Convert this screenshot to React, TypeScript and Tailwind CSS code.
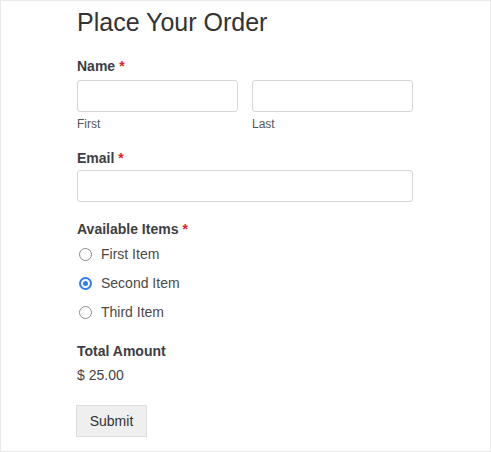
import React, { useState } from 'react';

const font = { fontFamily: '"Liberation Sans", Arial, sans-serif' };

const items = ['First Item', 'Second Item', 'Third Item'];

const Required = () => <span className="ml-[4px] text-[#e02424]">*</span>;

const FieldLabel = ({ children, required = false, className = '' }: { children: React.ReactNode; required?: boolean; className?: string }) => (
  <div className={`text-[14px] leading-[20px] font-bold text-[#3d3d44] ${className}`}>
    {children}
    {required && <Required />}
  </div>
);

const TextBox = ({ type = 'text' }: { type?: string }) => (
  <input
    type={type}
    className="block w-full h-[32px] rounded-[3px] border border-[#d6d6d6] bg-white px-2 text-[14px] outline-none"
  />
);

const Radio = ({ checked }: { checked: boolean }) =>
  checked ? (
    <span className="flex h-[13px] w-[13px] items-center justify-center rounded-full border-[2px] border-[#2f7bf5] bg-white">
      <span className="h-[5px] w-[5px] rounded-full bg-[#2f7bf5]" />
    </span>
  ) : (
    <span className="h-[13px] w-[13px] rounded-full border border-[#8c8c8c] bg-white" />
  );

export default function App() {
  const [selected, setSelected] = useState(1);

  return (
    <div className="h-[452px] w-[491px] border border-[#e9e9e9] bg-white" style={font}>
      <form className="w-[336px] pl-[76px] pt-[7px] box-content" onSubmit={e => e.preventDefault()}>
        <h1 className="text-[25px] leading-[29px] font-normal text-[#333333]">Place Your Order</h1>

        <FieldLabel required className="mt-[19px]">Name</FieldLabel>
        <div className="mt-[4px] grid grid-cols-2 gap-x-[14px]">
          <div>
            <TextBox />
            <div className="mt-[4px] text-[12px] leading-[16px] text-[#555555]">First</div>
          </div>
          <div>
            <TextBox />
            <div className="mt-[4px] text-[12px] leading-[16px] text-[#555555]">Last</div>
          </div>
        </div>

        <FieldLabel required className="mt-[16px]">Email</FieldLabel>
        <div className="mt-[2px]">
          <TextBox type="email" />
        </div>

        <FieldLabel required className="mt-[17px]">Available Items</FieldLabel>
        <div className="mt-[5px] flex flex-col gap-[9px]">
          {items.map((item, i) => (
            <label
              key={item}
              className="flex h-[20px] cursor-pointer items-center gap-[9px] pl-[2px] text-[14px] leading-[20px] text-[#4a4a4a]"
              onClick={() => setSelected(i)}
            >
              <Radio checked={selected === i} />
              {item}
            </label>
          ))}
        </div>

        <FieldLabel className="mt-[19px]">Total Amount</FieldLabel>
        <div className="mt-[4px] text-[14px] leading-[20px] text-[#444444]">$ 25.00</div>

        <button
          type="submit"
          className="mt-[20px] h-[32px] w-[71px] -ml-[1px] border border-[#dddddd] bg-[#efefef] text-[14px] text-[#333333]"
        >
          Submit
        </button>
      </form>
    </div>
  );
}
